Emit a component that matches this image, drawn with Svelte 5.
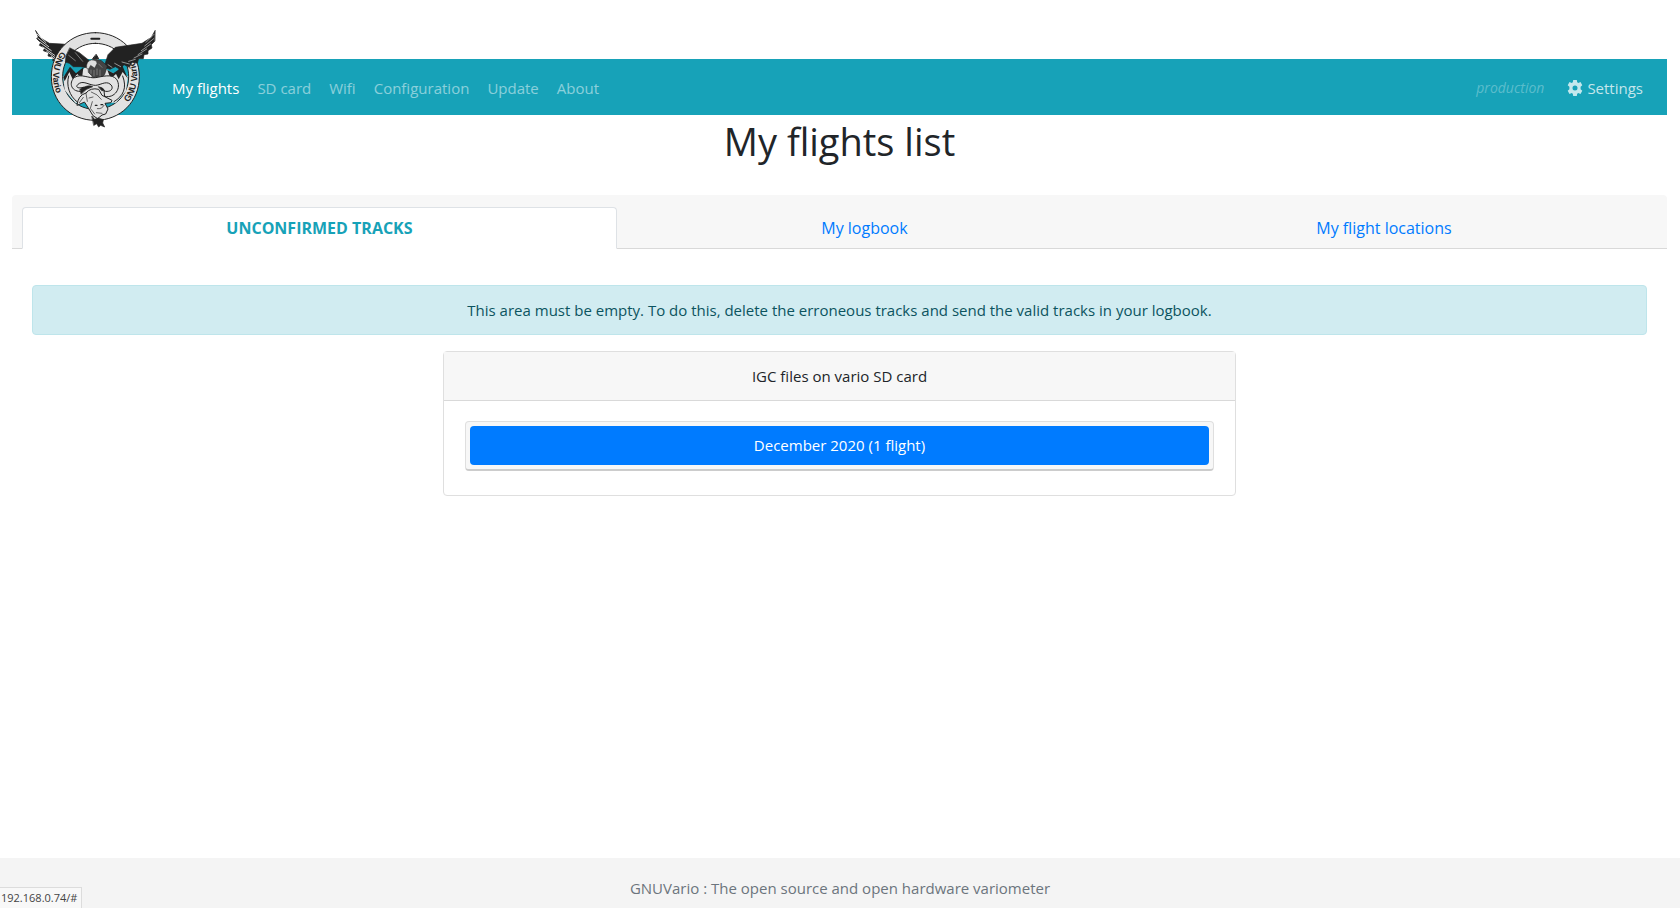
<script>
  const links = ['My flights', 'SD card', 'Wifi', 'Configuration', 'Update', 'About'];
  const tabs = ['UNCONFIRMED TRACKS', 'My logbook', 'My flight locations'];
</script>

<div class="page">
  <div class="shell">
    <nav class="navbar">
      <a class="brand" href="#home" aria-label="GNUVario">
        <svg viewBox="45 30 363 294" width="121" height="98" fill="none" stroke="#222" stroke-width="3" stroke-linejoin="round" stroke-linecap="round">
          <!-- outer left wing, behind the ring -->
          <path d="M47 32L62 54L88 70L126 72L160 76L150 110L128 138L108 132L112 122L98 122L100 112L84 108L86 98L70 92L74 84L58 76L62 68L50 56L54 50Z" fill="#222" stroke-width="2" />
          <path d="M51 42L78 68M53 54L86 80M60 67L94 92M68 81L104 106M80 94L112 118M94 110L116 128" stroke="#ccc" stroke-width="3" />
          <!-- sky and ring -->
          <path d="M150 90Q190 66 228 70Q270 68 306 90L300 117H156Z" fill="#fff" stroke="none" />
          <path d="M226 38C150 38 94 96 94 170S150 301 226 301S358 244 358 170S302 38 226 38ZM226 70C170 70 128 114 128 170S170 268 226 268S326 226 326 170S284 70 226 70Z" fill="#e2e2e2" fill-rule="evenodd" />
          <!-- mountains -->
          <path d="M130 170L152 148L170 162L190 148L226 108L262 150L284 162L304 150L324 170L318 214L288 248L166 248L134 210Z" fill="#e2e2e2" stroke="none" />
          <path d="M130 172L150 140L168 160L190 142L186 176L172 162L158 178L148 156L134 184ZM262 150L280 160L294 150L306 134L324 176L308 156L296 178L288 162L272 176Z" fill="#222" stroke="none" />
          <path d="M146 168C138 196 148 228 172 246M308 168C322 204 310 228 282 245" />
          <path d="M214 56H238" stroke-width="6" />
          <path id="leftRing" d="M124 94A126 126 0 0 0 128 249" stroke="none" />
          <path id="rightRing" d="M325 247A126 126 0 0 0 326 94" stroke="none" />
          <g class="lettering" fill="#222" stroke="none">
            <text><textPath href="#leftRing">GNU Vario</textPath></text>
            <text><textPath href="#rightRing">GNU Vario</textPath></text>
          </g>
          <!-- inner left wing -->
          <path d="M150 84L178 98L208 122L206 144L182 140L160 140L148 130L136 126L138 108Z" fill="#222" stroke-width="2" />
          <path d="M146 106L166 122M166 98L188 124" stroke="#aaa" stroke-width="2" />
          <!-- right wing, over the ring -->
          <path d="M405 32L394 52L366 70L326 76L286 82L264 104L252 142L270 148L286 140L300 148L312 134L328 142L336 126L352 130L356 116L370 116L372 104L384 102L384 92L396 84L394 74L404 64Z" fill="#222" stroke-width="2" />
          <path d="M402 43L378 67M401 56L374 78M392 72L364 92M380 87L354 104M366 102L342 114M346 118L326 124M328 132L306 126M302 140L284 130M276 142L264 134" stroke="#ccc" stroke-width="2" />
          <!-- eagle body, head and chest -->
          <path d="M204 130Q210 118 226 118L244 122L262 138L254 163L244 176L234 168L224 180L214 166L206 158Z" fill="#444" stroke-width="2" />
          <path d="M200 144Q198 124 214 120Q230 120 231 130L224 144L212 136L206 146Z" fill="#ddd" stroke-width="1" />
          <path d="M213 150V160M222 151V168M231 147V164M240 150V168M236 132L246 142" stroke="#999" stroke-width="2" />
          <path d="M229 104L236 116H219Z" fill="#222" />
          <!-- gnu horns and head -->
          <path d="M186 214C154 218 144 188 164 172C183 160 208 176 226 173C247 170 275 160 290 178C306 204 284 236 254 229L252 213C274 219 284 202 270 192C257 182 240 196 226 196C209 196 192 182 178 190C164 199 170 208 190 202Z" fill="#e2e2e2" />
          <path d="M180 208Q204 192 218 200Q196 206 184 222ZM236 200Q250 202 254 212L246 212Z" fill="#222" stroke-width="2" />
          <path d="M171 255Q174 226 198 219Q212 202 236 208L246 226L276 241L273 248L255 250L264 267L257 282L246 285L233 296L219 287L205 264L194 247Z" fill="#e2e2e2" />
          <path d="M198 220L202 244M178 248L190 232M214 216Q233 222 244 238M207 234L219 231M217 245L211 265L224 282M232 266Q246 268 252 256M229 278L246 280" stroke-width="2" />
          <path d="M226 256h5M243 254h5" stroke-width="4" />
          <path d="M216 289L224 298L235 294L250 299L248 309L254 321L242 316L236 321L230 311L222 316Z" fill="#222" stroke-width="2" />
        </svg>
      </a>
      <div class="links">
        {#each links as link, i}
          <a href="#{i}" class:active={i === 0}>{link}</a>
        {/each}
      </div>
      <div class="tools">
        <em>production</em>
        <a href="#settings">
          <svg viewBox="0 0 16 16" width="16" height="16" fill="currentColor" aria-hidden="true">
            <path fill-rule="evenodd" d="M6.200 0h3.600l.4 2.200 1.100.7 2.200-.8 1.800 3.100-1.700 1.500v2.600l1.700 1.500-1.800 3.100-2.200-.8-1.100.7-.4 2.200H6.200l-.4-2.200-1.100-.7-2.200.8L.7 10.800l1.700-1.500V6.700L.7 5.200l1.800-3.100 2.200.8 1.100-.7ZM8 5.500A2.500 2.500 0 1 0 8 10.500A2.500 2.500 0 0 0 8 5.500Z" />
          </svg>
          Settings
        </a>
      </div>
    </nav>

    <main>
      <h1>My flights list</h1>
      <div class="tabs">
        {#each tabs as tab, i}
          <a href="#tab{i}" class:current={i === 0}>{tab}</a>
        {/each}
      </div>
      <div class="content">
        <div class="alert" role="status">
          This area must be empty. To do this, delete the erroneous tracks and send the valid tracks in your logbook.
        </div>
        <section class="card">
          <header>IGC files on vario SD card</header>
          <div class="body">
            <div class="month">
              <button type="button">December 2020 (1 flight)</button>
            </div>
          </div>
        </section>
      </div>
    </main>
  </div>
  <footer>GNUVario : The open source and open hardware variometer</footer>
  <div class="status">192.168.0.74/#</div>
</div>

<style>
  :global(body) {
    margin: 0;
    background: #fff;
  }
  .page, .page * {
    box-sizing: border-box;
  }
  .page {
    display: flex;
    flex-direction: column;
    min-height: 100vh;
    font: 15px/24px "Open Sans", "Noto Sans", sans-serif;
    color: #212529;
  }
  a {
    color: #007bff;
    text-decoration: none;
  }
  .shell {
    flex: 1;
    padding: 59px 13px 0 12px;
  }
  .navbar {
    display: flex;
    align-items: center;
    height: 56px;
    padding: 0 24px 0 23px;
    background: #17a2b8;
  }
  .brand {
    height: 98px;
    margin: -16px 16px 0 0;
    position: relative;
    z-index: 1;
  }
  .brand svg {
    display: block;
  }
  .lettering {
    font: 700 27px "Liberation Sans", sans-serif;
  }
  .links {
    display: flex;
    flex: 1;
    gap: 18px;
    padding-top: 1px;
  }
  .links a {
    color: rgba(255, 255, 255, 0.5);
  }
  .links a.active {
    color: #fff;
  }
  .tools {
    display: flex;
    align-items: center;
    gap: 23px;
    padding-top: 1px;
  }
  .tools em {
    font-size: 14px;
    color: rgba(255, 255, 255, 0.3);
  }
  .tools a {
    display: flex;
    align-items: center;
    gap: 4px;
    color: rgba(255, 255, 255, 0.75);
  }
  h1 {
    margin: 0;
    padding: 2px 0 30px;
    font-size: 38px;
    line-height: 48px;
    font-weight: 400;
    text-align: center;
  }
  .tabs {
    display: flex;
    padding: 12px 11px 0 10px;
    background: #f7f7f7;
    border-bottom: 1px solid #d9d9d9;
    border-radius: 4px 4px 0 0;
    font-size: 16px;
  }
  .tabs a {
    flex: 1 1 auto;
    margin-bottom: -1px;
    padding: 8px 16px;
    border: 1px solid transparent;
    border-radius: 4px 4px 0 0;
    text-align: center;
  }
  .tabs a.current {
    border-color: #dee2e6 #dee2e6 #fff;
    background: #fff;
    color: #17a2b8;
    font-weight: 700;
  }
  .content {
    padding: 36px 20px;
  }
  .alert {
    margin-bottom: 16px;
    padding: 12px 20px;
    border: 1px solid #bee5eb;
    border-radius: 4px;
    background: #d1ecf1;
    color: #0c5460;
    text-align: center;
  }
  .card {
    width: calc(50% - 15px);
    margin: 0 auto;
    border: 1px solid #dfdfdf;
    border-radius: 4px;
    text-align: center;
  }
  .card header {
    padding: 12px 20px;
    border-bottom: 1px solid #d9d9d9;
    background: #f7f7f7;
  }
  .body {
    padding: 20px 21px 24px;
  }
  .month {
    padding: 4px;
    border: 1px solid #dfdfdf;
    border-bottom: 2px solid #ccc;
    border-radius: 4px;
    background: #f7f7f7;
  }
  button {
    display: block;
    width: 100%;
    padding: 8px 12px;
    border: 0;
    border-radius: 4px;
    background: #007bff;
    color: #fff;
    font: inherit;
    line-height: 23px;
  }
  footer {
    padding: 18px 0 8px;
    background: #f4f4f4;
    color: #6c757d;
    text-align: center;
  }
  .status {
    position: fixed;
    left: 0;
    bottom: 0;
    padding: 2px 4px 2px 1px;
    border: solid #dcdcdc;
    border-width: 1px 1px 0 0;
    background: #f8f8f8;
    color: #444;
    font-size: 11px;
    line-height: 16px;
  }
</style>
